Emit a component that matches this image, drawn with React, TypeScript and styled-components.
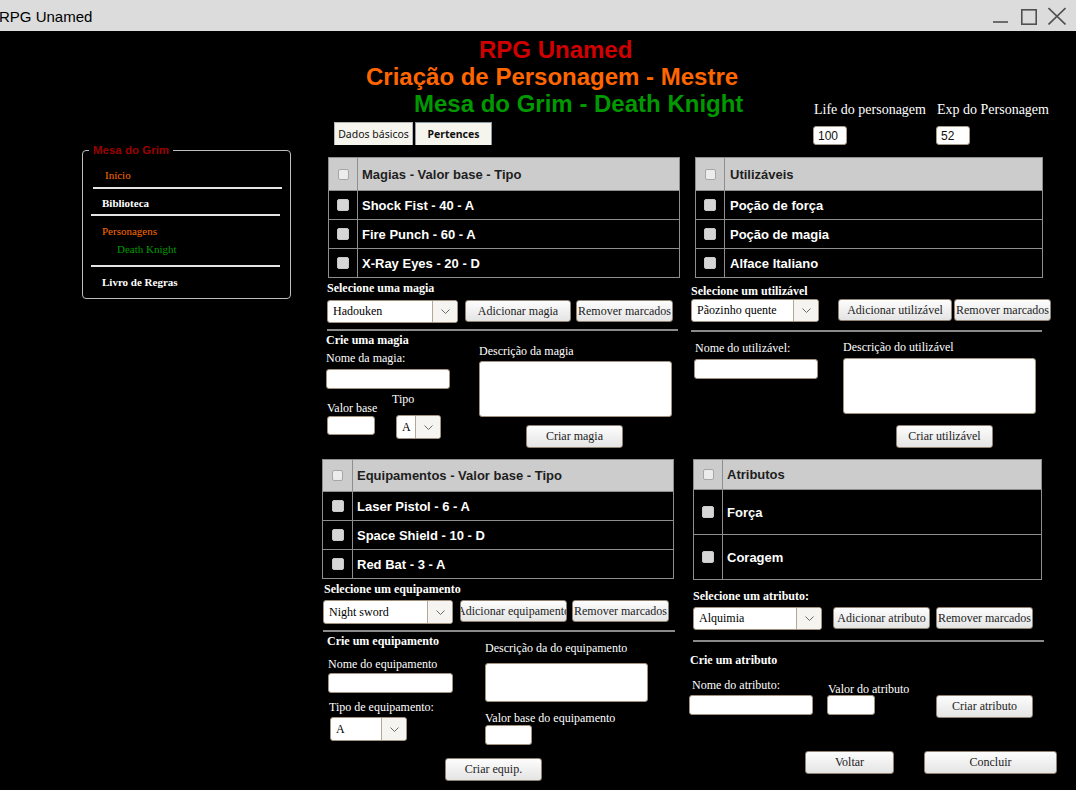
import React from 'react';
import styled, { createGlobalStyle } from 'styled-components';

const serif = `"Liberation Serif", "Times New Roman", serif`;
const sans = `"Liberation Sans", Arial, sans-serif`;

const GlobalStyle = createGlobalStyle`
  html, body {
    margin: 0;
    padding: 0;
    background: #000;
  }
  body {
    width: 1076px;
    height: 790px;
    overflow: hidden;
  }
  * {
    box-sizing: border-box;
  }
`;

const Window = styled.div`
  width: 1076px;
  height: 790px;
  background: #000;
  display: flex;
  flex-direction: column;
  overflow: hidden;
`;

const TitleBar = styled.div`
  height: 31px;
  flex: none;
  background: #dcdcdc;
  display: flex;
  align-items: flex-start;
  justify-content: space-between;
`;

const WindowTitle = styled.span`
  font-family: ${sans};
  font-size: 15px;
  line-height: 17px;
  color: #000;
  margin: 8px 0 0 -1px;
`;

const WindowControls = styled.div`
  display: flex;
  align-items: flex-start;
  padding-top: 7px;
  margin-right: 10px;
`;

const ControlIcon = styled.svg<{ $ml: number }>`
  display: block;
  margin-left: ${(p) => p.$ml}px;
  stroke: #505050;
  stroke-width: 1.6;
  fill: none;
`;

const Body = styled.div`
  flex: 1;
  display: flex;
`;

const Side = styled.div`
  width: 322px;
  flex: none;
`;

const NavBox = styled.fieldset`
  margin: 113px 0 0 82px;
  padding: 0;
  width: 209px;
  height: 155px;
  border: 1px solid #bdbdbd;
  border-radius: 4px;
  min-inline-size: 0;
`;

const NavLegend = styled.legend`
  margin-left: 6px;
  padding: 0 4px;
  font-family: ${sans};
  font-weight: 700;
  font-size: 11.5px;
  line-height: 13px;
  color: #9b0000;
`;

const NavItem = styled.div<{ $top: number; $indent: number; $color: string; $bold?: boolean }>`
  margin-top: ${(p) => p.$top}px;
  padding-left: ${(p) => p.$indent}px;
  font-family: ${serif};
  font-size: 11px;
  line-height: 14px;
  font-weight: ${(p) => (p.$bold ? 700 : 400)};
  color: ${(p) => p.$color};
  white-space: nowrap;
`;

const NavRule = styled.div<{ $top: number; $indent: number }>`
  margin-top: ${(p) => p.$top}px;
  margin-left: ${(p) => p.$indent}px;
  width: 189px;
  height: 2px;
  background: #e4e4e4;
`;

const Main = styled.div`
  width: 754px;
  flex: none;
  padding-top: 5px;
  display: flex;
  flex-direction: column;
`;

const Header = styled.div`
  display: flex;
  align-items: flex-end;
`;

const HeaderLeft = styled.div`
  width: 491px;
  flex: none;
`;

const Title = styled.div<{ $indent: number; $color: string }>`
  padding-left: ${(p) => p.$indent}px;
  font-family: ${sans};
  font-weight: 700;
  font-size: 24px;
  line-height: 27px;
  color: ${(p) => p.$color};
  white-space: nowrap;
`;

const Tabs = styled.div`
  display: flex;
  gap: 2px;
  margin: 5px 0 0 12px;
`;

const Tab = styled.div<{ $w: number; $active?: boolean }>`
  width: ${(p) => p.$w}px;
  height: 23px;
  background: #f5f5ee;
  border: 1px solid ${(p) => (p.$active ? '#8c9aa6' : '#b4b4b4')};
  border-bottom: none;
  display: flex;
  align-items: center;
  justify-content: center;
  font-family: "Noto Sans", "DejaVu Sans", sans-serif;
  font-size: 10.5px;
  font-weight: ${(p) => (p.$active ? 700 : 400)};
  color: #111;
  white-space: nowrap;
`;

const Stats = styled.div`
  display: flex;
  gap: 10px;
`;

const StatField = styled.div`
  display: flex;
  flex-direction: column;
  align-items: flex-start;
`;

const StatLabel = styled.div`
  margin: 0 0 8px 1px;
  font-family: ${serif};
  font-size: 14px;
  line-height: 16px;
  color: #fff;
  white-space: nowrap;
`;

const StatInput = styled.input`
  width: 34px;
  height: 19px;
  padding: 0 4px;
  background: #fff;
  border: 1px solid #a59b8c;
  border-radius: 3px;
  font-family: ${sans};
  font-size: 12px;
  color: #111;
  outline: none;
`;

const PanelRow = styled.div<{ $h?: number; $mt?: number }>`
  display: flex;
  margin-top: ${(p) => p.$mt ?? 0}px;
  height: ${(p) => (p.$h ? `${p.$h}px` : 'auto')};
`;

const Panel = styled.div<{ $w: number }>`
  width: ${(p) => p.$w}px;
  flex: none;
  display: flex;
  flex-direction: column;
  align-items: flex-start;
`;

const TableBox = styled.div<{ $ml: number; $w: number }>`
  margin-left: ${(p) => p.$ml}px;
  width: ${(p) => p.$w}px;
  border: 1px solid #8e8e8e;
  background: #000;
`;

const TRow = styled.div<{ $h: number; $head?: boolean }>`
  display: flex;
  height: ${(p) => p.$h}px;
  background: ${(p) => (p.$head ? '#cccccc' : '#000')};
  & + & {
    border-top: 1px solid #8e8e8e;
  }
`;

const CheckCell = styled.div<{ $w: number }>`
  width: ${(p) => p.$w}px;
  flex: none;
  border-right: 1px solid #8e8e8e;
  display: flex;
  align-items: center;
  justify-content: center;
`;

const CheckBox = styled.span<{ $head?: boolean }>`
  width: ${(p) => (p.$head ? 11 : 12)}px;
  height: ${(p) => (p.$head ? 11 : 12)}px;
  border-radius: 2px;
  background: ${(p) => (p.$head ? '#ececec' : '#d6d6d6')};
  border: 1px solid ${(p) => (p.$head ? '#a6a6a6' : '#c9c9c9')};
`;

const TextCell = styled.div<{ $pad: number; $head?: boolean }>`
  flex: 1;
  padding-left: ${(p) => p.$pad}px;
  display: flex;
  align-items: center;
  font-family: ${sans};
  font-weight: 700;
  font-size: 13px;
  color: ${(p) => (p.$head ? '#1e1e1e' : '#fff')};
  white-space: nowrap;
`;

const SectionLabel = styled.div<{ $mt?: number; $ml?: number }>`
  margin-top: ${(p) => p.$mt ?? 0}px;
  margin-left: ${(p) => p.$ml ?? 0}px;
  font-family: ${serif};
  font-weight: 700;
  font-size: 12px;
  line-height: 14px;
  color: #fff;
  white-space: nowrap;
`;

const FieldLabel = styled.div<{ $mt?: number; $ml?: number }>`
  margin-top: ${(p) => p.$mt ?? 0}px;
  margin-left: ${(p) => p.$ml ?? 0}px;
  font-family: ${serif};
  font-size: 12px;
  line-height: 14px;
  color: #fff;
  white-space: nowrap;
`;

const ControlRow = styled.div<{ $mt?: number; $ml?: number }>`
  display: flex;
  align-items: flex-start;
  margin-top: ${(p) => p.$mt ?? 0}px;
  margin-left: ${(p) => p.$ml ?? 0}px;
`;

const Divider = styled.div<{ $mt: number; $ml: number; $w: number }>`
  margin-top: ${(p) => p.$mt}px;
  margin-left: ${(p) => p.$ml}px;
  width: ${(p) => p.$w}px;
  height: 2px;
  background: #8a8a8a;
`;

const FormRow = styled.div`
  display: flex;
  align-items: flex-start;
`;

const FormCol = styled.div<{ $ml?: number; $w?: number }>`
  margin-left: ${(p) => p.$ml ?? 0}px;
  width: ${(p) => (p.$w ? `${p.$w}px` : 'auto')};
  flex: none;
  display: flex;
  flex-direction: column;
  align-items: flex-start;
`;

const Field = styled.div<{ $w?: number; $mt?: number; $ml?: number }>`
  width: ${(p) => (p.$w ? `${p.$w}px` : 'auto')};
  margin-top: ${(p) => p.$mt ?? 0}px;
  margin-left: ${(p) => p.$ml ?? 0}px;
  flex: none;
  display: flex;
  flex-direction: column;
  align-items: flex-start;
`;

const SelectBox = styled.div<{ $w: number; $h: number; $mt?: number; $ml?: number }>`
  width: ${(p) => p.$w}px;
  height: ${(p) => p.$h}px;
  margin-top: ${(p) => p.$mt ?? 0}px;
  margin-left: ${(p) => p.$ml ?? 0}px;
  flex: none;
  display: flex;
  background: #fff;
  border: 1px solid #a0927f;
  border-radius: 3px;
  overflow: hidden;
`;

const SelectValue = styled.div`
  flex: 1;
  padding-left: 5px;
  display: flex;
  align-items: center;
  font-family: ${serif};
  font-size: 12px;
  color: #000;
  white-space: nowrap;
  overflow: hidden;
`;

const SelectArrow = styled.div`
  width: 25px;
  flex: none;
  border-left: 1px solid #b3a898;
  background: #f6f4f1;
  display: flex;
  align-items: center;
  justify-content: center;
`;

const ButtonBox = styled.button<{ $w: number; $h?: number; $mt?: number; $ml?: number }>`
  width: ${(p) => p.$w}px;
  height: ${(p) => p.$h ?? 23}px;
  margin: ${(p) => p.$mt ?? 0}px 0 0 ${(p) => p.$ml ?? 0}px;
  padding: 0;
  flex: none;
  text-align: center;
  overflow: hidden;
  background: linear-gradient(#fdfdfd, #e4e4e4);
  border: 1px solid #8f8272;
  border-radius: 3px;
  font-family: ${serif};
  font-size: 12px;
  color: #1c1c1c;
  white-space: nowrap;
`;

// negative side margins let a too-long caption overflow equally on both sides
const ButtonText = styled.span`
  display: inline-block;
  margin: 0 -40px;
`;

type ButtonProps = { w: number; h?: number; mt?: number; ml?: number; children: React.ReactNode };

const Button = ({ w, h, mt, ml, children }: ButtonProps) => (
  <ButtonBox $w={w} $h={h} $mt={mt} $ml={ml}>
    <ButtonText>{children}</ButtonText>
  </ButtonBox>
);

const TextBox = styled.input<{ $w: number; $h: number; $mt?: number; $ml?: number }>`
  width: ${(p) => p.$w}px;
  height: ${(p) => p.$h}px;
  margin: ${(p) => p.$mt ?? 0}px 0 0 ${(p) => p.$ml ?? 0}px;
  padding: 0 4px;
  flex: none;
  background: #fff;
  border: 1px solid #a0927f;
  border-radius: 3px;
  outline: none;
`;

const TextArea = styled.textarea<{ $w: number; $h: number; $mt?: number; $ml?: number }>`
  width: ${(p) => p.$w}px;
  height: ${(p) => p.$h}px;
  margin: ${(p) => p.$mt ?? 0}px 0 0 ${(p) => p.$ml ?? 0}px;
  padding: 2px 4px;
  flex: none;
  display: block;
  background: #fff;
  border: 1px solid #a0927f;
  border-radius: 3px;
  resize: none;
  outline: none;
`;

type TableProps = {
  ml: number;
  w: number;
  checkW: number;
  headH: number;
  rowH: number;
  pad: number;
  head: string;
  rows: string[];
};

const DataTable = ({ ml, w, checkW, headH, rowH, pad, head, rows }: TableProps) => (
  <TableBox $ml={ml} $w={w}>
    <TRow $h={headH} $head>
      <CheckCell $w={checkW}>
        <CheckBox $head />
      </CheckCell>
      <TextCell $pad={pad} $head>
        {head}
      </TextCell>
    </TRow>
    {rows.map((r) => (
      <TRow key={r} $h={rowH}>
        <CheckCell $w={checkW}>
          <CheckBox />
        </CheckCell>
        <TextCell $pad={pad}>{r}</TextCell>
      </TRow>
    ))}
  </TableBox>
);

type SelectProps = { w: number; h: number; value: string; mt?: number; ml?: number };

const Select = ({ w, h, value, mt, ml }: SelectProps) => (
  <SelectBox $w={w} $h={h} $mt={mt} $ml={ml}>
    <SelectValue>{value}</SelectValue>
    <SelectArrow>
      <svg width="9" height="5" viewBox="0 0 9 5">
        <polyline points="0.5,0.5 4.5,4.5 8.5,0.5" fill="none" stroke="#6a6a6a" strokeWidth="1" />
      </svg>
    </SelectArrow>
  </SelectBox>
);

const App = () => {
  return (
    <Window>
      <GlobalStyle />
      <TitleBar>
        <WindowTitle>RPG Unamed</WindowTitle>
        <WindowControls>
          <ControlIcon $ml={0} width="15" height="18" viewBox="0 0 15 18">
            <line x1="0" y1="15" x2="15" y2="15" />
          </ControlIcon>
          <ControlIcon $ml={13} width="16" height="18" viewBox="0 0 16 18">
            <rect x="0.8" y="2.8" width="14.4" height="14.4" />
          </ControlIcon>
          <ControlIcon $ml={11} width="18" height="18" viewBox="0 0 18 18">
            <line x1="0.5" y1="1" x2="17.5" y2="17.5" />
            <line x1="17.5" y1="1" x2="0.5" y2="17.5" />
          </ControlIcon>
        </WindowControls>
      </TitleBar>

      <Body>
        <Side>
          <NavBox>
            <NavLegend>Mesa do Grim</NavLegend>
            <NavItem $top={11} $indent={22} $color="#ff6a00">
              Início
            </NavItem>
            <NavRule $top={5} $indent={10} />
            <NavItem $top={7} $indent={19} $color="#fff" $bold>
              Biblioteca
            </NavItem>
            <NavRule $top={4} $indent={8} />
            <NavItem $top={8} $indent={19} $color="#ff6a00">
              Personagens
            </NavItem>
            <NavItem $top={4} $indent={34} $color="#009a00">
              Death Knight
            </NavItem>
            <NavRule $top={9} $indent={8} />
            <NavItem $top={8} $indent={19} $color="#fff" $bold>
              Livro de Regras
            </NavItem>
          </NavBox>
        </Side>

        <Main>
          <Header>
            <HeaderLeft>
              <Title $indent={157} $color="#d00000">
                RPG Unamed
              </Title>
              <Title $indent={44} $color="#ff6600">
                Criação de Personagem - Mestre
              </Title>
              <Title $indent={92} $color="#009a00">
                Mesa do Grim - Death Knight
              </Title>
              <Tabs>
                <Tab $w={79}>Dados básicos</Tab>
                <Tab $w={77} $active>
                  Pertences
                </Tab>
              </Tabs>
            </HeaderLeft>
            <Stats>
              <StatField>
                <StatLabel>Life do personagem</StatLabel>
                <StatInput defaultValue="100" />
              </StatField>
              <StatField>
                <StatLabel>Exp do Personagem</StatLabel>
                <StatInput defaultValue="52" />
              </StatField>
            </Stats>
          </Header>

          <PanelRow $mt={12} $h={302}>
            <Panel $w={368}>
              <DataTable
                ml={6}
                w={352}
                checkW={29}
                headH={32}
                rowH={29}
                pad={4}
                head="Magias - Valor base - Tipo"
                rows={['Shock Fist - 40 - A', 'Fire Punch - 60 - A', 'X-Ray Eyes - 20 - D']}
              />
              <SectionLabel $mt={3} $ml={5}>
                Selecione uma magia
              </SectionLabel>
              <ControlRow $mt={5} $ml={5}>
                <Select w={131} h={23} value="Hadouken" />
                <Button w={106} h={22} ml={7}>
                  Adicionar magia
                </Button>
                <Button w={97} h={22} ml={5}>
                  Remover marcados
                </Button>
              </ControlRow>
              <Divider $mt={6} $ml={5} $w={351} />
              <FormRow>
                <FormCol $ml={4} $w={153}>
                  <SectionLabel $mt={2}>Crie uma magia</SectionLabel>
                  <FieldLabel $mt={4}>Nome da magia:</FieldLabel>
                  <TextBox $w={124} $h={20} $mt={4} />
                  <ControlRow $mt={3}>
                    <Field $w={65} $mt={9} $ml={1}>
                      <FieldLabel>Valor base</FieldLabel>
                      <TextBox $w={48} $h={19} $mt={1} />
                    </Field>
                    <Field>
                      <FieldLabel>Tipo</FieldLabel>
                      <Select w={45} h={24} value="A" mt={9} ml={4} />
                    </Field>
                  </ControlRow>
                </FormCol>
                <FormCol>
                  <FieldLabel $mt={13}>Descrição da magia</FieldLabel>
                  <TextArea $w={193} $h={56} $mt={3} />
                  <Button w={97} mt={8} ml={47}>
                    Criar magia
                  </Button>
                </FormCol>
              </FormRow>
            </Panel>

            <Panel $w={386}>
              <DataTable
                ml={5}
                w={348}
                checkW={29}
                headH={32}
                rowH={29}
                pad={5}
                head="Utilizáveis"
                rows={['Poção de força', 'Poção de magia', 'Alface Italiano']}
              />
              <SectionLabel $mt={6} $ml={1}>
                Selecione um utilizável
              </SectionLabel>
              <ControlRow $mt={1} $ml={1}>
                <Select w={128} h={23} value="Pãozinho quente" />
                <Button w={114} h={22} ml={19}>
                  Adicionar utilizável
                </Button>
                <Button w={97} h={22} ml={2}>
                  Remover marcados
                </Button>
              </ControlRow>
              <Divider $mt={8} $ml={1} $w={351} />
              <FormRow>
                <FormCol $ml={4} $w={149}>
                  <FieldLabel $mt={9} $ml={1}>
                    Nome do utilizável:
                  </FieldLabel>
                  <TextBox $w={124} $h={20} $mt={4} />
                </FormCol>
                <FormCol>
                  <FieldLabel $mt={8}>Descrição do utilizável</FieldLabel>
                  <TextArea $w={193} $h={56} $mt={4} />
                  <Button w={97} mt={11} ml={53}>
                    Criar utilizável
                  </Button>
                </FormCol>
              </FormRow>
            </Panel>
          </PanelRow>

          <PanelRow>
            <Panel $w={368}>
              <DataTable
                ml={0}
                w={352}
                checkW={30}
                headH={31}
                rowH={29}
                pad={4}
                head="Equipamentos - Valor base - Tipo"
                rows={['Laser Pistol - 6 - A', 'Space Shield - 10 - D', 'Red Bat - 3 - A']}
              />
              <SectionLabel $mt={3} $ml={2}>
                Selecione um equipamento
              </SectionLabel>
              <ControlRow $mt={4} $ml={1}>
                <Select w={130} h={24} value="Night sword" />
                <Button w={107} h={22} ml={7}>
                  Adicionar equipamento
                </Button>
                <Button w={97} h={22} ml={5}>
                  Remover marcados
                </Button>
              </ControlRow>
              <Divider $mt={6} $ml={1} $w={352} />
              <FormRow>
                <FormCol $ml={5} $w={158}>
                  <SectionLabel $mt={2}>Crie um equipamento</SectionLabel>
                  <FieldLabel $mt={9} $ml={1}>
                    Nome do equipamento
                  </FieldLabel>
                  <TextBox $w={125} $h={20} $mt={2} $ml={1} />
                  <FieldLabel $mt={7} $ml={2}>
                    Tipo de equipamento:
                  </FieldLabel>
                  <Select w={77} h={24} value="A" mt={3} ml={3} />
                </FormCol>
                <FormCol>
                  <FieldLabel $mt={9}>Descrição da do equipamento</FieldLabel>
                  <TextArea $w={163} $h={39} $mt={8} />
                  <FieldLabel $mt={9}>Valor base do equipamento</FieldLabel>
                  <TextBox $w={47} $h={20} />
                </FormCol>
              </FormRow>
              <Button w={97} mt={13} ml={123}>
                Criar equip.
              </Button>
            </Panel>

            <Panel $w={386}>
              <DataTable
                ml={3}
                w={349}
                checkW={29}
                headH={29}
                rowH={45}
                pad={4}
                head="Atributos"
                rows={['Força', 'Coragem']}
              />
              <SectionLabel $mt={9} $ml={3}>
                Selecione um atributo:
              </SectionLabel>
              <ControlRow $mt={4} $ml={3}>
                <Select w={129} h={23} value="Alquimia" />
                <Button w={97} h={22} ml={11}>
                  Adicionar atributo
                </Button>
                <Button w={97} h={22} ml={6}>
                  Remover marcados
                </Button>
              </ControlRow>
              <Divider $mt={10} $ml={3} $w={351} />
              <SectionLabel $mt={11}>Crie um atributo</SectionLabel>
              <ControlRow $mt={11} $ml={-1}>
                <Field $w={138}>
                  <FieldLabel $ml={3}>Nome do atributo:</FieldLabel>
                  <TextBox $w={124} $h={20} $mt={3} />
                </Field>
                <Field $w={109} $mt={4}>
                  <FieldLabel $ml={1}>Valor do atributo</FieldLabel>
                  <TextBox $w={48} $h={20} $mt={-1} />
                </Field>
                <Button w={97} mt={17}>
                  Criar atributo
                </Button>
              </ControlRow>
              <ControlRow $mt={33} $ml={115}>
                <Button w={89}>Voltar</Button>
                <Button w={133} ml={30}>
                  Concluir
                </Button>
              </ControlRow>
            </Panel>
          </PanelRow>
        </Main>
      </Body>
    </Window>
  );
};

export default App;
